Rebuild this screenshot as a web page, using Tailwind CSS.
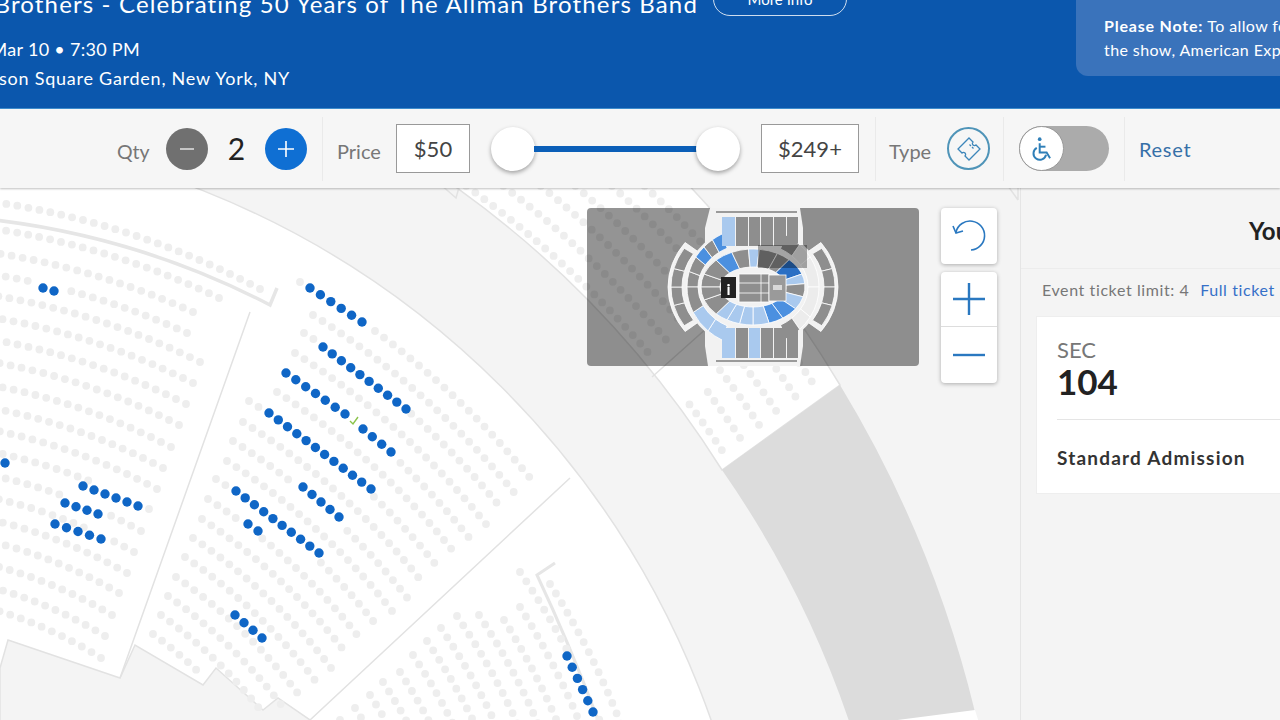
<!DOCTYPE html>
<html lang="en">

<head>
    <meta charset="UTF-8">
    <meta name="viewport" content="width=device-width, initial-scale=1.0">
    <script src="https://cdn.jsdelivr.net/npm/@tailwindcss/browser@4"></script>
    <title>Seat map</title>
</head>

<body class="[font-family:Lato,sans-serif]">
    <div class="w-[1280px] h-[720px] overflow-hidden flex flex-col bg-[#f4f4f4]">

        <!-- event header -->
        <header class="h-[109px] shrink-0 flex overflow-hidden bg-[#0b57ad] border-b border-[#3f8fd0] text-white">
            <div class="w-[1076px] shrink-0">
                <div class="h-[34px] -mt-[18px] flex items-center">
                    <div class="w-[698px] mt-[9px] shrink-0 flex justify-end whitespace-nowrap text-[24px] tracking-[1.150px]">The Allman Brothers - Celebrating 50 Years of The Allman Brothers Band</div>
                    <a class="ml-[15px] w-[134px] h-[34px] shrink-0 flex items-center justify-center rounded-full border border-white/80 text-[15px]">More Info</a>
                </div>
                <div class="w-[140px] mt-[20px] flex justify-end whitespace-nowrap text-[18px] leading-[26px] tracking-[0.3px]">Sun Mar 10 • 7:30 PM</div>
                <div class="w-[290px] mt-[3px] flex justify-end whitespace-nowrap text-[18px] leading-[26px] tracking-[0.75px]">Madison Square Garden, New York, NY</div>
            </div>
            <div class="w-[320px] h-[76px] shrink-0 pl-[28px] pt-[14px] rounded-b-xl bg-[#3a73bb] text-[16px] leading-[24px] tracking-[0.4px] whitespace-nowrap">
                <p><b class="tracking-[0.8px]">Please Note:</b> To allow for a better view of</p>
                <p>the show, American Express</p>
            </div>
        </header>

        <!-- filter bar -->
        <div class="relative z-10 h-[79px] shrink-0 flex items-center bg-[#f6f6f6] shadow-[0_1px_2px_rgba(0,0,0,0.25)] text-[#777]">
            <span class="ml-[117px] w-[33px] mt-[6px] text-[19.500px]">Qty</span>
            <button class="ml-[16px] w-[42px] h-[42px] flex items-center justify-center rounded-full bg-[#707070]">
                <svg width="18" height="18" viewBox="0 0 18 18"><path d="M2 9h14" stroke="#ddd" stroke-width="1.6" /></svg>
            </button>
            <span class="w-[57px] text-center text-[30px] text-[#222]">2</span>
            <button class="w-[42px] h-[42px] flex items-center justify-center rounded-full bg-[#0f6fd3]">
                <svg width="20" height="20" viewBox="0 0 20 20"><path d="M2 10h16M10 2v16" stroke="#fff" stroke-width="1.6" /></svg>
            </button>
            <div class="ml-[15px] w-px h-[64px] bg-[#eaeaea]"></div>
            <span class="ml-[14px] w-[45px] mt-[5px] text-[20px]">Price</span>
            <div class="ml-[14px] w-[74px] h-[49px] flex items-center justify-center bg-white border border-[#999] text-[22px] text-[#444]">$50</div>
            <div class="ml-[21px] w-[249px] flex items-center">
                <span class="w-[44px] h-[44px] shrink-0 rounded-full bg-white shadow-[0_2px_4px_rgba(0,0,0,0.35)]"></span>
                <span class="h-[6px] w-[163px] -mx-[1px] bg-[#0b5fb8]"></span>
                <span class="w-[44px] h-[44px] shrink-0 rounded-full bg-white shadow-[0_2px_4px_rgba(0,0,0,0.35)]"></span>
            </div>
            <div class="ml-[21px] w-[98px] h-[49px] flex items-center justify-center bg-white border border-[#999] text-[22px] text-[#444]">$249+</div>
            <div class="ml-[16px] w-px h-[64px] bg-[#eaeaea]"></div>
            <span class="ml-[13px] w-[43px] mt-[5px] text-[20px]">Type</span>
            <button class="ml-[15px] w-[43px] h-[43px] flex items-center justify-center rounded-full border-2 border-[#4f94b8]">
                <svg width="30" height="30" viewBox="0 0 30 30" fill="none" stroke="#3d86ba" stroke-width="1.3">
                    <path d="M15 4 L19 8 A1.800 1.800 0 0 0 22 11 L26 15 L15 26 L11 22 A1.800 1.800 0 0 0 8 19 L4 15 Z" />
                    <path d="M15.500 10.500 L17 12 M18 13 L19.500 14.500" />
                </svg>
            </button>
            <div class="ml-[13px] w-px h-[64px] bg-[#eaeaea]"></div>
            <div class="ml-[15px] w-[90px] h-[45px] rounded-full bg-[#ababab]">
                <div class="w-[45px] h-[45px] flex items-center justify-center rounded-full bg-white border border-[#999]">
                    <svg width="30" height="30" viewBox="0 0 26 26" fill="none" stroke="#2f7fb8" stroke-width="1.7">
                        <circle cx="11" cy="4.500" r="1.600" fill="#2f7fb8" stroke="none" />
                        <path d="M11 8v8h6l3 5" />
                        <path d="M11 11h5" />
                        <path d="M8.500 12a5.500 5.500 0 1 0 8 6" />
                    </svg>
                </div>
            </div>
            <div class="ml-[15px] w-px h-[64px] bg-[#eaeaea]"></div>
            <a class="ml-[14px] text-[20px] tracking-[0.7px] text-[#3670a8]">Reset</a>
        </div>

        <main class="flex-1 flex min-h-0">
            <!-- seat map -->
            <section class="relative w-[1020px] shrink-0 overflow-hidden">
                <svg class="block blur-[0.5px]" width="1020" height="532" viewBox="0 188 1020 532">
                    <circle cx="-124" cy="1013" r="885" fill="#fff" stroke="#e2e2e2" stroke-width="1.5" />
                    <path d="M440 176 A1005 1005 0 0 1 722 470 L840 385 A1150 1150 0 0 0 680 176 Z" fill="#fff" stroke="#e2e2e2" stroke-width="1.5" />
                    <path d="M722 470 A1005 1005 0 0 1 852 730 L905 725 L975 712 A1150 1150 0 0 0 840 385 Z" fill="#dcdcdc" />
                    <path d="M882 722 L975 710 L980 726 L870 730 Z" fill="#fff" />
                    <path d="M0 668 L8 640 L120 678 L135 645 L203 685 L216 668 L263 710 L278 698 L310 720 L310 730 L0 730 Z" fill="#f4f4f4" stroke="#e2e2e2" stroke-width="1.5" />
                    <path d="M250 312 L120 678 M570 478 L310 720 M652 377 L800 245 M440 184 L456 198 L460 184 M1008 186 L1018 200 M1018 186 V200" fill="none" stroke="#e2e2e2" stroke-width="1.5" />
                    <path d="M-5 220 A805 805 0 0 1 270 305 L277 288" fill="none" stroke="#e6e6e6" stroke-width="3.5" />
                    <path d="M555 563 L537 575 Q570 645 600 725" fill="none" stroke="#e6e6e6" stroke-width="3" />
                    <g id="seats" fill="#eeeeee"></g>
                    <g id="picked" fill="#0f66c6"></g>
                    <path d="M350 421 L353 424 L358 417" fill="none" stroke="#8bc34a" stroke-width="1.4" />
                </svg>

                <!-- overview map -->
                <div class="absolute left-[587px] top-[20px] w-[332px] h-[158px] rounded bg-black/[0.42] overflow-hidden">
                    <svg class="blur-[0.6px]" width="332" height="158" viewBox="587 208 332 158">
                        <g id="arena"></g>
                    </svg>
                </div>

                <!-- map controls -->
                <div class="absolute left-[941px] top-[20px] flex flex-col gap-[8px]">
                    <button class="w-[56px] h-[56px] flex items-center justify-center bg-white rounded-sm shadow-[0_1px_4px_rgba(0,0,0,0.3)]">
                        <svg width="38" height="38" viewBox="0 0 38 38" fill="none" stroke="#2a78c0" stroke-width="1.6">
                            <path d="M6 15 A14.500 14.500 0 1 1 21 33" />
                            <path d="M3 9 L6 16 L13 14" />
                        </svg>
                    </button>
                    <div class="w-[56px] bg-white rounded-sm shadow-[0_1px_4px_rgba(0,0,0,0.3)]">
                        <button class="w-full h-[55px] flex items-center justify-center border-b border-[#ddd]">
                            <svg width="34" height="34" viewBox="0 0 34 34"><path d="M1 17h32M17 1v32" stroke="#2a78c0" stroke-width="2.4" /></svg>
                        </button>
                        <button class="w-full h-[56px] flex items-center justify-center">
                            <svg width="34" height="34" viewBox="0 0 34 34"><path d="M1 17h32" stroke="#2a78c0" stroke-width="2.4" /></svg>
                        </button>
                    </div>
                </div>
            </section>

            <!-- ticket panel -->
            <aside class="flex-1 min-w-0 border-l border-[#e5e5e5] whitespace-nowrap">
                <div class="h-[81px] pl-[228px] pt-[25px] border-b border-[#ececec] text-[24px] font-bold text-[#222]">Your Tickets</div>
                <div class="h-[47px] pl-[21px] pt-[9px] text-[16px] tracking-[0.6px] text-[#777]">Event ticket limit: 4 <a class="ml-[6px] text-[#3670c8]">Full ticket list</a></div>
                <div class="ml-[15px] w-[300px] h-[178px] pl-[20px] pt-[20px] bg-white border border-[#eee]">
                    <div class="text-[22px] leading-[26px] text-[#777]">SEC</div>
                    <div class="text-[35px] leading-[36px] font-bold text-[#222]">104</div>
                    <div class="mt-[20px] pt-[24px] border-t border-[#e5e5e5] text-[19px] font-bold tracking-[1.200px] text-[#333]">Standard Admission</div>
                </div>
            </aside>
        </main>
    </div>

    <script>
        const C = [-124, 1013];
        const seats = [];
        const picked = [];

        // blue rows: x0, y0, x1, y1, number of seats
        const pickedRows = [
            [43, 288, 54, 291, 2], [5, 463, 5, 463, 1], [83, 486, 138, 506, 6], [65, 503, 98, 514, 4], [55, 524, 101, 539, 5],
            [310, 288, 362, 322, 6], [323, 347, 406, 409, 10], [286, 373, 345, 414, 7], [363, 429, 391, 452, 4],
            [269, 413, 371, 489, 12], [303, 487, 339, 517, 5], [236, 491, 319, 553, 10], [248, 524, 258, 531, 2],
            [235, 615, 262, 638, 4], [567, 656, 593, 712, 6]
        ];
        pickedRows.forEach(([x0, y0, x1, y1, n]) => {
            for (let i = 0; i < n; i++) {
                const t = n > 1 ? i / (n - 1) : 0;
                picked.push([x0 + (x1 - x0) * t, y0 + (y1 - y0) * t]);
            }
        });

        // walks a row around the arena centre until stop() says so
        function walk(x, y, dir, stop, skip) {
            const r = Math.hypot(x - C[0], y - C[1]);
            let a = Math.atan2(y - C[1], x - C[0]);
            const step = dir * 11.2 / r;
            for (let i = 0; i < 90; i++) {
                const px = C[0] + r * Math.cos(a);
                const py = C[1] + r * Math.sin(a);
                if (stop(px, py)) break;
                if (!skip || !skip(px, py)) seats.push([px, py]);
                a += step;
            }
        }

        // left block, walked backwards from the row ends
        [[260, 289], [219, 298], [193, 312], [187, 333], [200, 362], [193, 383], [186, 404], [179, 425], [171, 447], [163, 468],
         [157, 489], [149, 509], [141, 531], [134, 552], [127, 573], [119, 593], [112, 615], [105, 636], [101, 658]]
            .forEach(([x, y]) => walk(x, y, -1, (px) => px < -8));

        // middle block
        const pastWall = (px, py) => ((px - 570) * 242 + (py - 478) * 260) / 355 > -22;
        [[300, 282], [313, 315], [304, 333], [295, 353], [286, 373], [277, 392], [269, 413], [243, 422], [233, 441], [227, 461],
         [216, 479], [208, 499], [202, 519], [193, 538], [185, 557], [176, 577], [168, 596]]
            .forEach(([x, y]) => walk(x, y, 1, pastWall));
        walk(249, 401, 1, (px) => px > 268);
        walk(161, 615, 1, (px) => px > 264);
        walk(153, 634, 1, (px) => px > 204);

        // lower block
        [[550, 584], [520, 572], [520, 607], [504, 620], [479, 615], [457, 616], [441, 628], [427, 641], [413, 655], [400, 672],
         [383, 682], [370, 695], [355, 708], [340, 720]]
            .forEach(([x, y]) => walk(x, y, 1, (px, py) => py > 730));

        // block behind the overview map
        [1016, 1038, 1061, 1083, 1107, 1129].forEach((r) => {
            const a = Math.asin((186 - C[1]) / r);
            const x = C[0] + r * Math.cos(a);
            const y = C[1] + r * Math.sin(a);
            const pastEnd = (px, py) => ((px - 722) * 85 + (py - 470) * 118) / 145 > -10;
            const nearAisle = (px, py) => {
                const d = ((px - 652) * 133 + (py - 377) * 148) / 199;
                return d > -14 && d < 38;
            };
            walk(x, y, 1, pastEnd, nearAisle);
        });

        const circle = (p, r) => `<circle cx="${p[0].toFixed(1)}" cy="${p[1].toFixed(1)}" r="${r}"/>`;
        document.getElementById('seats').innerHTML = seats
            .filter((s) => !picked.some((p) => Math.hypot(p[0] - s[0], p[1] - s[1]) < 7))
            .map((s) => circle(s, 3.9)).join('');
        document.getElementById('picked').innerHTML = picked.map((p) => circle(p, 4.7)).join('');

        // overview map
        const GRAY = '#8e8e8e', LIGHT = '#a9c9ee', MID = '#4b90e0', DARK = '#2a6fc4', PALE = '#ececec';
        const cx = 753, cy = 287;
        function wedge(rx0, ry0, rx1, ry1, t0, t1, fill) {
            const pt = (rx, ry, t) => `${(cx + rx * Math.cos(t * Math.PI / 180)).toFixed(1)} ${(cy + ry * Math.sin(t * Math.PI / 180)).toFixed(1)}`;
            return `<path d="M${pt(rx0, ry0, t0)} A${rx0} ${ry0} 0 0 1 ${pt(rx0, ry0, t1)} L${pt(rx1, ry1, t1)} A${rx1} ${ry1} 0 0 0 ${pt(rx1, ry1, t0)} Z" fill="${fill}" stroke="#fff" stroke-width="0.8"/>`;
        }
        const column = (x0, x1, y0, y1, fill) => `<rect x="${x0}" y="${y0}" width="${x1 - x0}" height="${y1 - y0}" fill="${fill}"/>`;
        // side blocks of the upper ring; the top and bottom are straight columns
        const upper = [[-180, -165, GRAY], [-165, -150, GRAY], [-150, -138, MID], [-138, -128, GRAY], [-128, -118, MID],
            [-60, -45, GRAY], [-45, -30, PALE], [-30, 0, PALE], [0, 30, PALE], [30, 45, PALE], [45, 60, GRAY],
            [118, 133, LIGHT], [133, 155, LIGHT], [155, 180, GRAY]];
        const lower = [[-180, -160, GRAY], [-160, -135, GRAY], [-135, -114, MID], [-114, -95, GRAY], [-95, -83, LIGHT], [-83, -62, GRAY], [-62, -46, GRAY],
            [-46, -20, DARK], [-20, -5, LIGHT], [-5, 15, GRAY], [15, 35, LIGHT], [35, 55, MID], [55, 72, MID], [72, 90, LIGHT], [90, 105, LIGHT], [105, 120, LIGHT], [120, 135, LIGHT], [135, 160, GRAY], [160, 180, GRAY]];
        let html = '';
        // outer wings
        html += wedge(85, 74, 68, 58, 143, 217, '#f2f2f2') + wedge(85, 74, 68, 58, -37, 37, '#f2f2f2');
        [[147, 165], [165, 180], [180, 195], [195, 213]].forEach(([a, b]) => { html += wedge(82, 71, 71, 61, a, b, GRAY); });
        [[-33, -15], [-15, 0], [0, 15], [15, 33]].forEach(([a, b]) => { html += wedge(82, 71, 71, 61, a, b, GRAY); });
        html += `<ellipse cx="${cx}" cy="${cy}" rx="69" ry="62" fill="#f2f2f2"/>`;
        html += '<path d="M710 208 H800 L803 228 V346 L800 366 H708 L705 346 V228 Z" fill="#f2f2f2"/>';
        html += '<path d="M716 212 H797 M716 361 H797" stroke="#9a9a9a" stroke-width="2"/>';
        upper.forEach(([a, b, f]) => { html += wedge(66, 60, 55, 44, a, b, f); });
        [[722, 735, LIGHT], [736, 748, GRAY], [749, 760, GRAY], [761, 773, GRAY], [774, 786, GRAY], [787, 798, GRAY]]
            .forEach(([a, b, f]) => { html += column(a, b, 217, a === 787 ? 243 : 246, f); });
        [[722, 735, LIGHT], [736, 748, GRAY], [749, 760, LIGHT], [761, 773, GRAY], [774, 786, GRAY], [787, 798, GRAY]]
            .forEach(([a, b, f]) => { html += column(a, b, 328, 358, f); });
        lower.forEach(([a, b, f]) => { html += wedge(52, 38, 33, 20, a, b, f); });
        html += '<rect x="739" y="274" width="30" height="28" fill="#8e8e8e" stroke="#fff" stroke-width="0.8"/><path d="M739 283 H769 M739 293 H769 M761 274 V302" stroke="#fff" stroke-width="0.8"/>';
        html += '<rect x="769" y="275" width="17" height="26" fill="#9a9a9a" stroke="#fff" stroke-width="0.8"/><rect x="773" y="285" width="9" height="5" fill="#d8d8d8"/>';
        html += '<rect x="758" y="245" width="49" height="23" fill="#000" fill-opacity="0.32"/>';
        html += '<rect x="721" y="277" width="15" height="21" fill="#222"/><text x="728.500" y="295" font-size="16" font-weight="700" fill="#fff" text-anchor="middle">i</text>';
        document.getElementById('arena').innerHTML = html;
    </script>
</body>

</html>
